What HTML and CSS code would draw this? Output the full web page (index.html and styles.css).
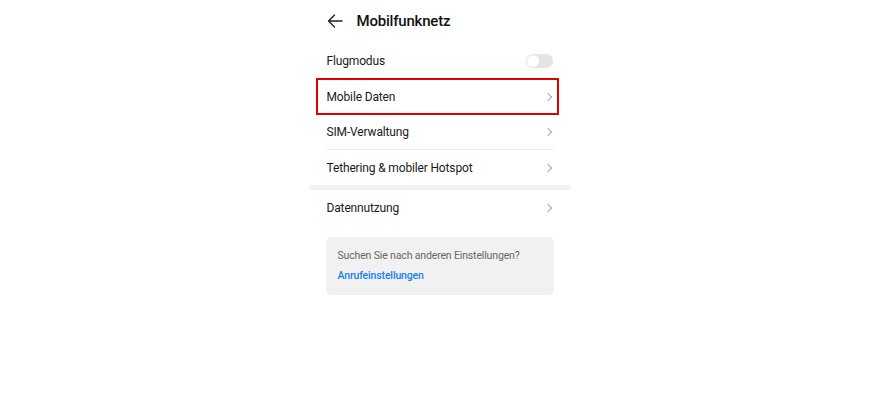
FILE: index.html
```html
<!DOCTYPE html>
<html lang="de">
<head>
<meta charset="utf-8">
<title>Mobilfunknetz</title>
<link rel="stylesheet" href="styles.css">
</head>
<body>
<div class="screen">
  <header class="header">
    <svg class="back" width="16" height="14" viewBox="0 0 16 14" aria-hidden="true">
      <path d="M15 7H1.5M7.5 1L1.5 7l6 6" fill="none" stroke="#222" stroke-width="1.4" stroke-linecap="round" stroke-linejoin="round"/>
    </svg>
    <h1 class="title">Mobilfunknetz</h1>
  </header>

  <ul class="list">
    <li class="row first"><span class="label">Flugmodus</span><span class="toggle"><span class="knob"></span></span></li>
    <li class="row highlighted"><span class="label">Mobile Daten</span><span class="chev"></span></li>
    <li class="row"><span class="label">SIM-Verwaltung</span><span class="chev"></span></li>
    <li class="row last"><span class="label">Tethering &amp; mobiler Hotspot</span><span class="chev"></span></li>
  </ul>
  <div class="band"></div>
  <ul class="list">
    <li class="row single"><span class="label">Datennutzung</span><span class="chev"></span></li>
  </ul>

  <div class="card">
    <p class="card-text">Suchen Sie nach anderen Einstellungen?</p>
    <a class="card-link" href="#">Anrufeinstellungen</a>
  </div>
</div>
</body>
</html>
```

FILE: styles.css
```css
html, body {
  margin: 0;
  padding: 0;
  background: #fff;
}
body {
  font-family: Roboto, "Noto Sans", "Liberation Sans", sans-serif;
  color: #1a1a1a;
}
.screen {
  width: 262px;
  margin: 0 auto;
}
.header {
  display: flex;
  align-items: center;
  height: 42px;
  padding: 0 18px;
  box-sizing: border-box;
}
.back {
  display: block;
  margin-right: 14px;
}
.title {
  margin: 0;
  font-size: 15px;
  letter-spacing: -0.2px;
  font-weight: 500;
  color: #111;
}
.list {
  list-style: none;
  margin: 0;
  padding: 0;
}
.row {
  position: relative;
  display: flex;
  align-items: center;
  justify-content: space-between;
  height: 35px;
  margin: 0 17px;
  border-bottom: 1px solid #ececec;
  box-sizing: border-box;
}
.row.first {
  height: 38px;
}
.row.last {
  border-bottom: none;
}
.row.single {
  height: 36px;
  border-bottom: none;
}
.label {
  font-size: 12px;
  letter-spacing: -0.15px;
  color: #1a1a1a;
  padding-left: 1px;
}
.highlighted::after {
  content: "";
  position: absolute;
  left: -10px;
  right: -5px;
  top: -2px;
  bottom: -1px;
  border: 2px solid #e00000;
}
.chev {
  width: 5px;
  height: 5px;
  border-top: 1.2px solid #a8a8a8;
  border-right: 1.2px solid #a8a8a8;
  transform: rotate(45deg);
  margin-right: 3px;
}
.toggle {
  position: relative;
  width: 27px;
  height: 14px;
  border-radius: 7px;
  background: #e4e4e4;
  margin-right: 1px;
}
.knob {
  position: absolute;
  left: 1px;
  top: 1px;
  width: 12px;
  height: 12px;
  border-radius: 50%;
  background: #fff;
}
.band {
  height: 5px;
  background: #f2f2f2;
}
.card {
  margin: 11px 17px 0;
  padding: 12px 12px 13px;
  background: #f1f1f1;
  border-radius: 6px;
}
.card-text {
  margin: 0 0 7px;
  font-size: 10.5px;
  line-height: 13px;
  letter-spacing: -0.15px;
  color: #666;
}
.card-link {
  display: block;
  font-size: 10.5px;
  line-height: 13px;
  letter-spacing: -0.15px;
  font-weight: 500;
  color: #1a7ff0;
  text-decoration: none;
}
```
